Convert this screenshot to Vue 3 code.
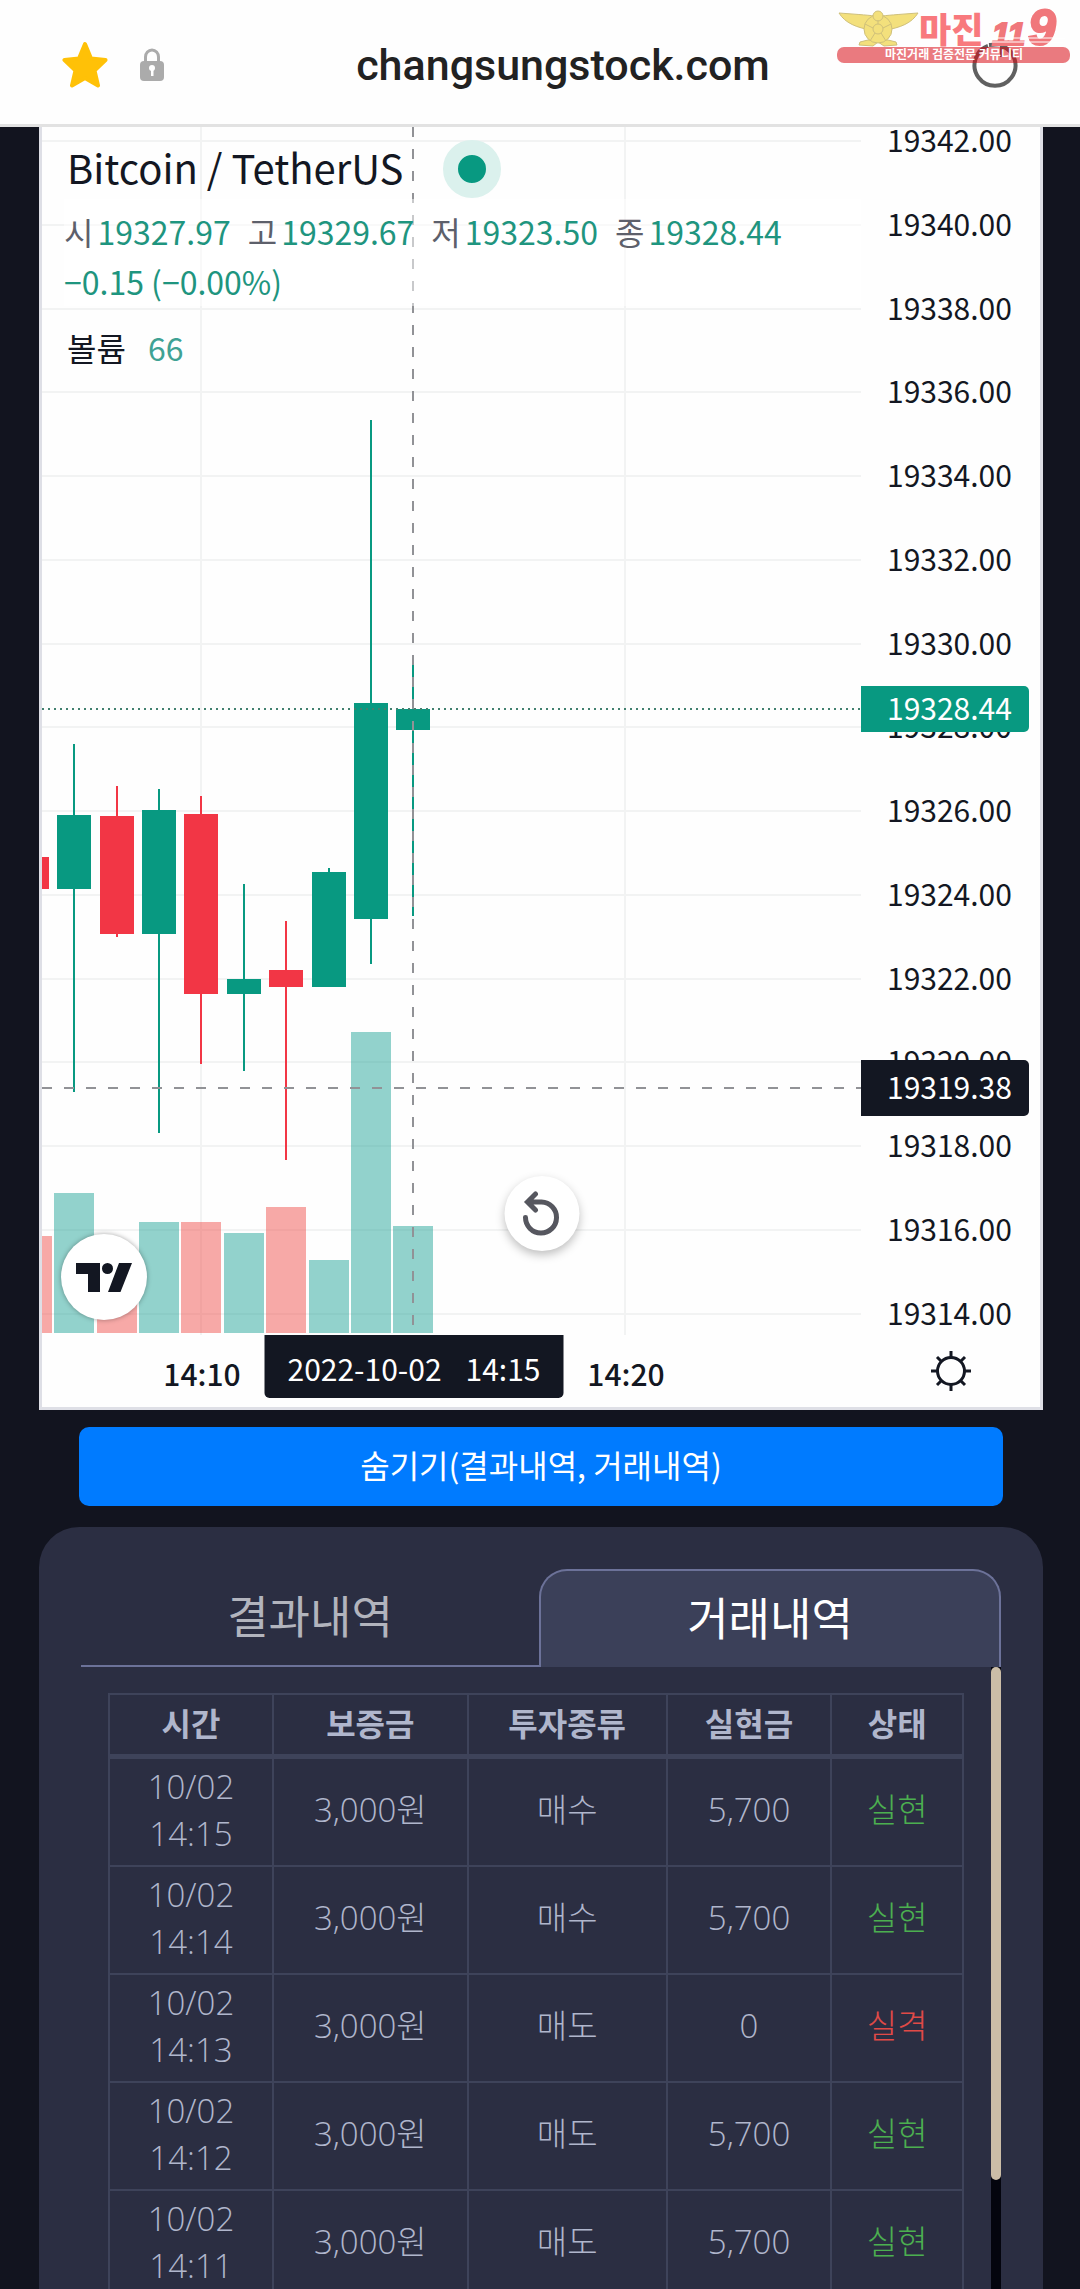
<template>
    <div class="page">
        <!-- Browser bar -->
        <header class="browser-bar">
            <div class="bar-left">
                <button class="icon-btn" aria-label="Bookmark">
                    <svg width="46" height="48" viewBox="0 0 46 48">
                        <path d="M23 3l6 14.500 14.500 1.500-11 10.500 3.500 15L23 37 10 44.500l3.500-15L2.500 19 17 17.500z" fill="#ffc107" stroke="#ffc107" stroke-width="4" stroke-linejoin="round" />
                    </svg>
                </button>
                <svg class="lock" width="24" height="34" viewBox="0 0 24 34">
                    <path d="M5.500 14V9a6.500 7 0 0 1 13 0v5" fill="none" stroke="#ababab" stroke-width="3" />
                    <rect x="0" y="13" width="24" height="20" rx="4" fill="#ababab" />
                    <circle cx="12" cy="20" r="3" fill="#fff" />
                    <rect x="11" y="20" width="2.500" height="8" fill="#fff" />
                </svg>
            </div>
            <span class="domain">changsungstock.com</span>
            <button class="icon-btn reload" aria-label="Reload">
                <svg width="46" height="46" viewBox="0 0 46 46">
                    <path d="M30 4A20.500 20.500 0 1 1 16 4M17 3l13-1v13" fill="none" stroke="#606060" stroke-width="4" />
                </svg>
            </button>
            <svg class="watermark" width="234" height="58" viewBox="0 0 234 58">
                <g class="emblem">
                    <path d="M2 5c13 1 28 2 36 3 2 8 1 12-3 14C20 20 8 15 2 5zM81 5c-13 1-28 2-36 3-2 8-1 12 3 14 15-2 27-7 33-17z" />
                    <path d="M23 34l-1 3 14 1 5-4 6 4 13-1-1-3-8-2H31z" />
                    <circle cx="41" cy="21" r="14" />
                    <circle cx="41" cy="21" r="5" />
                    <circle cx="41" cy="8" r="5" />
                    <path d="M41 16V12M36 20l-8-4M46 20l8-4M38 25l-5 8M44 25l5 8" />
                </g>
                <text class="mark-name" x="82" y="35">마진</text>
                <text class="mark-num" x="155" y="37">11</text>
                <text class="mark-nine" x="191" y="37">9</text>
                <path d="M154 30h74M152 34h74" stroke="#fff" stroke-width="1" />
                <rect class="mark-bar" x="0" y="39" width="233" height="16" rx="7" />
                <text class="mark-sub" x="117" y="51">마진거래 검증전문 커뮤니티</text>
            </svg>
        </header>

        <main class="content">
            <!-- Chart -->
            <section class="chart">
                <div class="plot">
                    <svg class="plot-svg" :viewBox="`0 0 ${W} ${H}`">
                        <g class="grid">
                            <path v-for="p in ticks" :key="p" :d="`M0 ${yOf(p)}H${W}`" />
                            <path :d="`M159 0V${H}M583 0V${H}`" />
                        </g>
                        <rect v-for="c in candles" :key="'v' + c.x" :x="c.x - 20" :y="c.vol" width="40" :height="H - 2 - c.vol" :class="['vol', c.dir]" />
                        <g v-for="c in candles" :key="'c' + c.x" :class="c.dir">
                            <rect :x="c.x - 1" :y="c.high" width="2" :height="c.low - c.high" />
                            <rect :x="c.x - 17" :y="c.top" width="34" :height="c.bottom - c.top" />
                        </g>
                        <path class="last-line" :d="`M0 ${yOf(19328.44)}H${W}`" />
                        <path class="cross-x" :d="`M0 961H${W}`" />
                        <path class="cross-y" :d="`M371 0V${H}`" />
                    </svg>

                    <div class="legend">
                        <div class="legend-title">
                            <span>Bitcoin / TetherUS</span>
                            <i class="status-dot"></i>
                        </div>
                        <div class="legend-values">
                            <span v-for="o in ohlc" :key="o.name" class="ohlc"><em>{{ o.name }}</em>{{ o.value }}</span>
                            <span>−0.15 (−0.00%)</span>
                        </div>
                        <div class="legend-volume"><span>볼륨</span><span class="vol-value">66</span></div>
                    </div>

                    <a class="tv-logo" href="#" aria-label="TradingView">
                        <svg width="56" height="29" viewBox="0 0 56 29" fill="#131722">
                            <path d="M0 0h24v29H12V11H0zM43 0h13L44.500 29H32z" />
                            <circle cx="31.500" cy="5.500" r="5.500" />
                        </svg>
                    </a>
                    <button class="reset-btn" aria-label="Reset chart">
                        <svg width="42" height="46" viewBox="0 0 42 46" fill="none" stroke="#56575f" stroke-width="5" stroke-linecap="round">
                            <path d="M15 3l-8 8 8 8M8 11h13a15.500 15.500 0 1 1-16 15.500" />
                        </svg>
                    </button>
                </div>

                <div class="price-axis">
                    <span v-for="p in ticks" :key="p" class="price" :style="{ top: pct(yOf(p)) }">{{ p.toFixed(2) }}</span>
                    <span class="price badge badge-last" :style="{ top: pct(yOf(19328.44)) }">19328.44</span>
                    <span class="price badge badge-cross" :style="{ top: pct(961) }">19319.38</span>
                </div>

                <div class="time-axis">
                    <span class="time" :style="{ left: xPct(160) }">14:10</span>
                    <span class="time" :style="{ left: xPct(584) }">14:20</span>
                    <span class="time-badge" :style="{ left: xPct(372) }">2022-10-02<b>14:15</b></span>
                </div>
                <button class="icon-btn settings" aria-label="Settings">
                    <svg width="40" height="40" viewBox="0 0 40 40" fill="none" stroke="#131722" stroke-width="3">
                        <circle cx="20" cy="20" r="13.500" />
                        <path d="M20 0v6M20 34v6M0 20h6M34 20h6M6 6l4.500 4.500M29.500 29.500L34 34M6 34l4.500-4.500M29.500 10.500L34 6" />
                    </svg>
                </button>
            </section>

            <button class="hide-btn">숨기기(결과내역, 거래내역)</button>

            <!-- History panel -->
            <section class="panel">
                <div class="tabs" role="tablist">
                    <button v-for="t in tabs" :key="t" role="tab" :aria-selected="t === activeTab"
                        :class="['tab', { active: t === activeTab }]" @click="activeTab = t">{{ t }}</button>
                </div>
                <div class="scroll-area">
                    <div class="table-wrap">
                        <table>
                            <colgroup>
                                <col class="col-time"><col class="col-deposit"><col class="col-type"><col class="col-amount"><col>
                            </colgroup>
                            <thead>
                                <tr><th v-for="h in headers" :key="h">{{ h }}</th></tr>
                            </thead>
                            <tbody>
                                <tr v-for="r in rows" :key="r.time">
                                    <td>10/02<br>{{ r.time }}</td>
                                    <td>3,000원</td>
                                    <td>{{ r.type }}</td>
                                    <td>{{ r.amount }}</td>
                                    <td :class="r.status === '실현' ? 'win' : 'lose'">{{ r.status }}</td>
                                </tr>
                            </tbody>
                        </table>
                    </div>
                    <div class="scroll-track"><div class="scroll-thumb"></div></div>
                </div>
            </section>
        </main>
    </div>
</template>

<script setup>
import { ref } from 'vue';

// Plot canvas size
const W = 819;
const H = 1208;

// Price ticks from 19342 down to 19314
const ticks = Array.from({ length: 15 }, (_, i) => 19342 - i * 2);

const yOf = (price) => Math.round(14 + (19342 - price) * 41.886);
const pct = (y) => `${(y / H) * 100}%`;
const xPct = (x) => `${(x / W) * 100}%`;

const ohlc = [
    { name: '시', value: '19327.97' },
    { name: '고', value: '19329.67' },
    { name: '저', value: '19323.50' },
    { name: '종', value: '19328.44' },
];

const candles = [
    { x: -10, dir: 'down', high: 730, top: 730, bottom: 762, low: 762, vol: 1109 },
    { x: 32, dir: 'up', high: 617, top: 688, bottom: 762, low: 965, vol: 1066 },
    { x: 75, dir: 'down', high: 659, top: 689, bottom: 807, low: 810, vol: 1150 },
    { x: 117, dir: 'up', high: 662, top: 683, bottom: 807, low: 1006, vol: 1095 },
    { x: 159, dir: 'down', high: 669, top: 687, bottom: 867, low: 937, vol: 1095 },
    { x: 202, dir: 'up', high: 757, top: 852, bottom: 867, low: 944, vol: 1106 },
    { x: 244, dir: 'down', high: 794, top: 843, bottom: 860, low: 1033, vol: 1080 },
    { x: 287, dir: 'up', high: 741, top: 745, bottom: 860, low: 860, vol: 1133 },
    { x: 329, dir: 'up', high: 293, top: 576, bottom: 792, low: 837, vol: 905 },
    { x: 371, dir: 'up', high: 528, top: 582, bottom: 603, low: 789, vol: 1099 },
];

const tabs = ['결과내역', '거래내역'];
const activeTab = ref('거래내역');

const headers = ['시간', '보증금', '투자종류', '실현금', '상태'];
const rows = [
    { time: '14:15', type: '매수', amount: '5,700', status: '실현' },
    { time: '14:14', type: '매수', amount: '5,700', status: '실현' },
    { time: '14:13', type: '매도', amount: '0', status: '실격' },
    { time: '14:12', type: '매도', amount: '5,700', status: '실현' },
    { time: '14:11', type: '매도', amount: '5,700', status: '실현' },
];
</script>

<style>
body {
    margin: 0;
    background: #12141f;
}
</style>

<style scoped>
* {
    box-sizing: border-box;
}

.page {
    display: flex;
    flex-direction: column;
    height: 100vh;
    overflow: hidden;
    background: #12141f;
    font-family: "Noto Sans CJK KR", "Noto Sans", sans-serif;
}

button {
    font-family: inherit;
    cursor: pointer;
}

.icon-btn {
    display: flex;
    padding: 0;
    border: 0;
    background: none;
}

/* Browser bar */
.browser-bar {
    position: relative;
    flex: none;
    display: flex;
    align-items: center;
    justify-content: space-between;
    height: 127px;
    padding: 6px 62px 0;
    background: #fefefe;
    border-bottom: 3px solid #e2e2e2;
}

.bar-left {
    display: flex;
    align-items: center;
    gap: 32px;
}

.domain {
    font-family: Roboto, sans-serif;
    font-size: 43px;
    font-weight: 500;
    color: #222;
}

.reload {
    width: 56px;
    justify-content: flex-end;
}

.watermark {
    position: absolute;
    top: 8px;
    right: 9px;
    overflow: visible;
}

.emblem {
    fill: #f3e07c;
    stroke: #cfc07a;
    stroke-width: 1;
}

.mark-name {
    font-size: 35px;
    font-weight: 900;
    fill: #f8797d;
}

.mark-num,
.mark-nine {
    font-family: "Liberation Sans", sans-serif;
    font-weight: 700;
    font-style: italic;
    font-size: 32px;
    fill: #f0777b;
    stroke: #f0777b;
    stroke-width: 2;
}

.mark-nine {
    font-size: 50px;
}

.mark-bar {
    fill: #d80a12;
    opacity: 0.54;
}

.mark-sub {
    font-size: 12px;
    font-weight: 700;
    fill: #fff;
    text-anchor: middle;
}

/* Chart */
.content {
    flex: 1;
    min-height: 0;
    display: flex;
    flex-direction: column;
    padding: 0 37px 0 39px;
}

.chart {
    flex: none;
    display: grid;
    grid-template-columns: 1fr 179px;
    grid-template-rows: auto 72px;
    background: #fefefe;
    border: 3px solid #dedfe6;
    border-top: 0;
}

.plot {
    position: relative;
    overflow: hidden;
}

.plot-svg {
    display: block;
    width: 100%;
    height: auto;
}

.grid path {
    stroke: #f2f3f3;
    stroke-width: 2;
}

.up {
    fill: #089981;
}

.down {
    fill: #f23645;
}

.vol.up {
    fill: #26a69a;
    opacity: 0.5;
}

.vol.down {
    fill: #ef5350;
    opacity: 0.5;
}

.last-line {
    stroke: #42806f;
    stroke-width: 2;
    stroke-dasharray: 2 4;
}

.cross-x,
.cross-y {
    stroke: #919296;
    stroke-width: 2;
    stroke-dasharray: 10 12;
}

.legend {
    position: absolute;
    top: 12px;
    left: 22px;
    color: #131722;
    font-size: 32px;
}

.legend-title {
    display: flex;
    align-items: center;
    gap: 40px;
    height: 60px;
    padding-left: 3px;
    font-size: 40px;
    line-height: 56px;
}

.legend-title span {
    padding-bottom: 4px;
}

.status-dot {
    width: 58px;
    height: 58px;
    border: 15px solid #dbf1ed;
    border-radius: 50%;
    background: #089981;
}

.legend-values {
    display: flex;
    flex-wrap: wrap;
    column-gap: 17px;
    padding-top: 7px;
    line-height: 50px;
    color: #1f957f;
    background: rgba(255, 255, 255, 0.5);
}

.ohlc em {
    margin-right: 4px;
    font-style: normal;
    color: #5d606b;
}

.legend-volume {
    display: flex;
    gap: 22px;
    margin-top: 16px;
    padding-left: 3px;
    line-height: 50px;
}

.vol-value {
    color: #3fa294;
}

.tv-logo {
    position: absolute;
    left: 19px;
    bottom: 15px;
    width: 86px;
    height: 86px;
    display: flex;
    align-items: center;
    justify-content: center;
    border-radius: 50%;
    background: #fff;
    box-shadow: 0 0 5px rgba(0, 0, 0, 0.35);
}

.reset-btn {
    position: absolute;
    left: 61%;
    bottom: 84px;
    width: 75px;
    height: 75px;
    display: flex;
    align-items: center;
    justify-content: center;
    transform: translateX(-50%);
    padding: 0;
    border: 0;
    border-radius: 50%;
    background: #fff;
    box-shadow: 0 4px 10px rgba(0, 0, 0, 0.25);
}

.price-axis,
.time-axis {
    position: relative;
    font-size: 30px;
    color: #131722;
}

.price {
    position: absolute;
    left: 0;
    padding: 0 0 4px 26px;
    line-height: 42px;
    transform: translateY(-50%);
}

.badge {
    width: 168px;
    border-radius: 0 5px 5px 0;
    color: #fff;
}

.badge-last {
    background: #089981;
}

.badge-cross {
    background: #131722;
    line-height: 52px;
}

.time {
    position: absolute;
    top: 8px;
    line-height: 60px;
    font-weight: 500;
    transform: translateX(-50%);
}

.time-badge {
    position: absolute;
    top: 0;
    padding: 3px 23px 0;
    line-height: 60px;
    white-space: nowrap;
    color: #fff;
    background: #131722;
    border-radius: 0 0 5px 5px;
    transform: translateX(-50%);
}

.time-badge b {
    margin-left: 24px;
    font-weight: 400;
}

.settings {
    align-self: center;
    justify-self: center;
}

/* Toggle button */
.hide-btn {
    flex: none;
    height: 79px;
    margin: 17px 40px 21px;
    padding: 0 0 6px;
    border: 0;
    border-radius: 10px;
    background: #007bff;
    color: #fff;
    font-size: 32px;
    font-weight: 400;
}

/* History panel */
.panel {
    flex: 1;
    min-height: 0;
    display: flex;
    flex-direction: column;
    padding: 42px 42px 0;
    border-radius: 40px 40px 0 0;
    background: #2b2e42;
}

.tabs {
    flex: none;
    display: flex;
    height: 98px;
}

.tab {
    flex: 1;
    padding: 0 0 6px;
    border: 0;
    border-bottom: 2px solid #6c7299;
    background: none;
    color: #b2b4bd;
    font-size: 45px;
    font-weight: 400;
}

.tab.active {
    border: 2px solid #6c7299;
    border-bottom: 0;
    border-radius: 28px 28px 0 0;
    background: #3b4059;
    color: #fff;
}

.scroll-area {
    flex: 1;
    min-height: 0;
    display: flex;
    overflow: hidden;
}

.table-wrap {
    flex: 1;
    padding: 26px 27px 0;
}

.scroll-track {
    width: 10px;
    background: #04050e;
}

.scroll-thumb {
    height: 82.4%;
    border-radius: 5px;
    background: #cbbda7;
}

table {
    width: 100%;
    table-layout: fixed;
    border-collapse: collapse;
    color: #b0b6cc;
    font-family: "Open Sans", "Noto Sans CJK KR", sans-serif;
    font-size: 32px;
    text-align: center;
}

.col-time {
    width: 19.2%;
}

.col-deposit {
    width: 22.8%;
}

.col-type {
    width: 23.3%;
}

.col-amount {
    width: 19.3%;
}

th,
td {
    border: 2px solid #3e435a;
}

th {
    height: 62px;
    padding: 0 0 2px;
    border-bottom-width: 5px;
    font-weight: 700;
    line-height: 47px;
}

td {
    padding: 4px 0 8px;
    font-size: 33px;
    font-weight: 300;
    line-height: 47px;
}

.win {
    color: #4caf50;
}

.lose {
    color: #e04a47;
}
</style>
